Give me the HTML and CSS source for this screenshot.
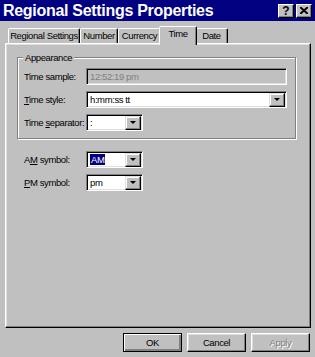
FILE: index.html
```html
<!DOCTYPE html>
<html lang="en">
<head>
    <meta charset="UTF-8">
    <title>Regional Settings Properties</title>
    <link rel="stylesheet" href="styles.css">
</head>
<body>
    <div class="window">
        <!-- Title bar -->
        <div class="titlebar">
            <span class="title">Regional Settings Properties</span>
            <div class="title-buttons">
                <span class="tbtn help">?</span>
                <span class="tbtn close">
                    <svg width="8" height="7" viewBox="0 0 8 7"><path d="M0 0L8 7M8 0L0 7" stroke="#000" stroke-width="2"/></svg>
                </span>
            </div>
        </div>

        <!-- Tabs -->
        <div class="tabs">
            <div class="tab tab-regional">Regional Settings</div>
            <div class="tab tab-number">Number</div>
            <div class="tab tab-currency">Currency</div>
            <div class="tab tab-time active">Time</div>
            <div class="tab tab-date">Date</div>
        </div>

        <div class="panel">
            <div class="group">
                <span class="group-label">Appearance</span>
                <div class="row">
                    <label>Time sample:</label>
                    <div class="field wide disabled">12:52:19 pm</div>
                </div>
                <div class="row">
                    <label><u>T</u>ime style:</label>
                    <div class="field wide combo"><span class="value">h:mm:ss tt</span><span class="drop"></span></div>
                </div>
                <div class="row">
                    <label>Time <u>s</u>eparator:</label>
                    <div class="field small combo"><span class="value">:</span><span class="drop"></span></div>
                </div>
            </div>

            <div class="symbols">
                <div class="row">
                    <label>A<u>M</u> symbol:</label>
                    <div class="field small combo"><span class="value"><span class="selected">AM</span></span><span class="drop"></span></div>
                </div>
                <div class="row">
                    <label><u>P</u>M symbol:</label>
                    <div class="field small combo"><span class="value">pm</span><span class="drop"></span></div>
                </div>
            </div>
        </div>

        <div class="buttons">
            <button class="btn default">OK</button>
            <button class="btn">Cancel</button>
            <button class="btn disabled">Apply</button>
        </div>
    </div>
</body>
</html>
```

FILE: styles.css
```css
body {
    margin: 0;
    padding: 0;
    background-color: #c0c0c0;
    font-family: "Liberation Sans", Arial, sans-serif;
    font-size: 9.5px;
    letter-spacing: -0.4px;
    color: #000;
}
.window {
    width: 315px;
    height: 357px;
    overflow: hidden;
}
.titlebar {
    height: 21px;
    background-color: #000080;
    display: flex;
    align-items: center;
    padding-left: 3px;
}
.title {
    color: #fff;
    font-size: 16px;
    font-weight: bold;
    letter-spacing: -0.3px;
}
.title-buttons {
    margin-left: auto;
    margin-right: 3px;
    display: flex;
    gap: 2px;
}
.tbtn {
    width: 16px;
    height: 14px;
    box-sizing: border-box;
    background: #c0c0c0;
    border: 1px solid;
    border-color: #fff #000 #000 #fff;
    box-shadow: inset -1px -1px 0 #808080;
    display: flex;
    align-items: center;
    justify-content: center;
    font-size: 12px;
    font-weight: bold;
    letter-spacing: 0;
}
.tabs {
    display: flex;
    align-items: flex-end;
    height: 17px;
    margin-top: 5px;
    padding-left: 8px;
    position: relative;
    z-index: 1;
}
.tab {
    height: 15px;
    box-sizing: border-box;
    border: 1px solid;
    border-bottom: none;
    border-color: #fff #000 transparent #fff;
    box-shadow: inset -1px 0 0 #808080;
    border-radius: 2px 2px 0 0;
    text-align: center;
    line-height: 14px;
    background: #c0c0c0;
}
.tab-regional { width: 72px; }
.tab-number { width: 38px; }
.tab-currency { width: 43px; }
.tab-time { width: 34px; }
.tab-date { width: 33px; }
.tab.active {
    width: 38px;
    height: 19px;
    margin: 0 -2px -2px -2px;
    line-height: 14px;
    position: relative;
    z-index: 2;
}
.panel {
    margin: 0 4px 0 5px;
    height: 285px;
    box-sizing: border-box;
    border: 1px solid;
    border-color: #fff #000 #000 #fff;
    box-shadow: inset -1px -1px 0 #808080, inset 1px 1px 0 #dfdfdf;
    padding: 13px 0 0 11px;
}
.group {
    position: relative;
    width: 279px;
    height: 82px;
    box-sizing: border-box;
    border: 1px solid #808080;
    box-shadow: 1px 1px 0 #fff, inset 1px 1px 0 #fff;
    padding: 10px 0 0 6px;
    display: flex;
    flex-direction: column;
    gap: 6px;
}
.group-label {
    position: absolute;
    top: -6px;
    left: 5px;
    padding: 0 2px;
    background: #c0c0c0;
    line-height: 11px;
}
.row {
    display: flex;
    align-items: center;
    height: 17px;
}
.row label {
    width: 62px;
    flex: none;
}
.field {
    height: 17px;
    box-sizing: border-box;
    background: #fff;
    border: 1px solid;
    border-color: #808080 #fff #fff #808080;
    box-shadow: inset 1px 1px 0 #000, inset -1px -1px 0 #dfdfdf;
    display: flex;
    align-items: center;
    padding: 0 1px 0 3px;
}
.field.wide { width: 201px; }
.field.small { width: 57px; }
.field.disabled {
    background: #c0c0c0;
    color: #808080;
}
.combo .value {
    flex: 1;
}
.selected {
    background: #000080;
    color: #fff;
    padding: 0 1px;
}
.drop {
    width: 16px;
    height: 14px;
    margin-top: 1px;
    box-sizing: border-box;
    background: #c0c0c0;
    border: 1px solid;
    border-color: #dfdfdf #000 #000 #dfdfdf;
    box-shadow: inset -1px -1px 0 #808080, inset 1px 1px 0 #fff;
    position: relative;
}
.drop::after {
    content: "";
    position: absolute;
    left: 4px;
    top: 4px;
    border-left: 3px solid transparent;
    border-right: 3px solid transparent;
    border-top: 3px solid #000;
}
.symbols {
    margin-top: 12px;
    padding-left: 7px;
    display: flex;
    flex-direction: column;
    gap: 6px;
}
.buttons {
    display: flex;
    justify-content: flex-end;
    gap: 5px;
    margin: 5px 5px 0 0;
}
.btn {
    width: 59px;
    height: 19px;
    background: #c0c0c0;
    border: 1px solid;
    border-color: #fff #000 #000 #fff;
    box-shadow: inset -1px -1px 0 #808080, inset 1px 1px 0 #dfdfdf;
    font-family: "Liberation Sans", Arial, sans-serif;
    font-size: 9.5px;
    letter-spacing: -0.4px;
    padding: 0;
}
.btn.default {
    border-color: #000;
    box-shadow: inset 1px 1px 0 #fff, inset -2px -2px 0 #808080;
}
.btn.disabled {
    color: #808080;
    text-shadow: 1px 1px 0 #fff;
}
```
